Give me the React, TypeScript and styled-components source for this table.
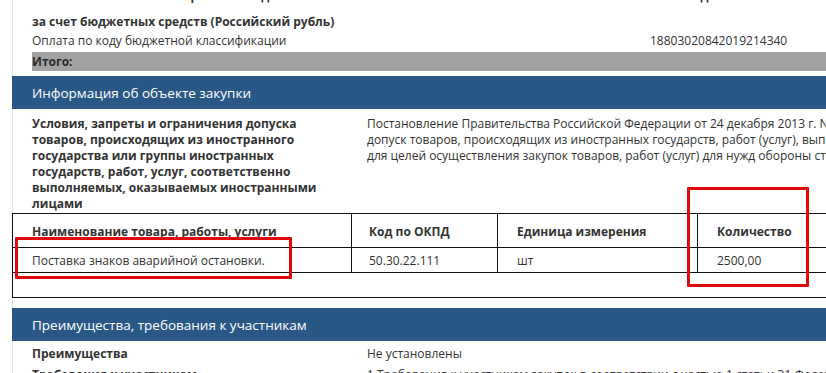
import * as React from 'react'
import styled, { createGlobalStyle } from 'styled-components'

const GlobalStyle = createGlobalStyle`
  html, body {
    margin: 0;
    padding: 0;
    background: #fff;
    overflow: hidden;
  }
  body {
    font-family: 'Open Sans', 'Noto Sans', sans-serif;
    font-size: 12px;
    color: #333;
  }
`

const Page = styled.div`
  margin: -14px 0 0 12px;
  width: 980px;
  border-left: 1px solid #dce3eb;
  min-height: 420px;
`

const Block = styled.div`
  padding: 0 0 0 19px;
`

const LineRow = styled.div<{ $bold?: boolean; $top?: number }>`
  display: flex;
  align-items: center;
  height: 19px;
  margin-top: ${p => p.$top ?? 0}px;
  font-weight: ${p => (p.$bold ? 700 : 400)};
  white-space: nowrap;
`

const LeftCell = styled.div`
  width: 618px;
`

const Total = styled.div`
  margin: 2px 0 0 19px;
  height: 19px;
  background: #a2a2a2;
  display: flex;
  align-items: center;
  font-weight: 700;
  color: #2c2c2c;
`

const SectionHeader = styled.div<{ $top: number }>`
  margin-top: ${p => p.$top}px;
  margin-left: -1px;
  height: 33px;
  background: #2a5886;
  color: #fff;
  font-size: 13.5px;
  display: flex;
  align-items: center;
  padding-left: 20px;
`

const FieldRow = styled.div<{ $pad: number }>`
  display: grid;
  grid-template-columns: 335px 1fr;
  padding: ${p => p.$pad}px 0 0 19px;
  line-height: 16px;
`

const FieldLabel = styled.div`
  font-weight: 700;
  max-width: 292px;
`

const FieldValue = styled.div`
  white-space: nowrap;
`

const TableFrame = styled.div`
  position: relative;
  margin-top: 1px;
  margin-left: -1px;
  border: 1px solid #111;
  border-right: none;
  padding-bottom: 24px;
`

const Grid = styled.table`
  border-collapse: collapse;
  table-layout: fixed;
`

const HeadCell = styled.th<{ $w: number; $pl: number }>`
  width: ${p => p.$w - p.$pl}px;
  height: 31px;
  text-align: left;
  font-weight: 700;
  padding: 2px 0 0 ${p => p.$pl}px;
  border-bottom: 1px solid #111;
  border-left: 1px solid #111;
  white-space: nowrap;
  &:first-child { border-left: none; }
`

const BodyCell = styled.td<{ $pl: number }>`
  height: 24px;
  padding: 0 0 0 ${p => p.$pl}px;
  border-bottom: 1px solid #111;
  border-left: 1px solid #111;
  white-space: nowrap;
  &:first-child { border-left: none; }
`

const Marker = styled.div<{ $x: number; $y: number; $w: number; $h: number }>`
  position: absolute;
  left: ${p => p.$x}px;
  top: ${p => p.$y}px;
  width: ${p => p.$w}px;
  height: ${p => p.$h}px;
  border: 3px solid #e0080c;
  box-sizing: border-box;
  border-radius: 1px;
`

const columns = [
  { title: 'Наименование товара, работы, услуги', w: 338, pl: 19 },
  { title: 'Код по ОКПД', w: 145, pl: 17 },
  { title: 'Единица измерения', w: 199, pl: 19 },
  { title: 'Количество', w: 250, pl: 19 },
]

const row = ['Поставка знаков аварийной остановки.', '50.30.22.111', 'шт', '2500,00']

const App = () => (
  <>
    <GlobalStyle />
    <Page>
      <Block>
        <LineRow $bold>
          <LeftCell>Оплата исполнения контракта по годам</LeftCell>
          <span>КБК / Код КОСГУ</span>
        </LineRow>
        <LineRow $bold $top={7}>
          <LeftCell>за счет бюджетных средств (Российский рубль)</LeftCell>
        </LineRow>
        <LineRow>
          <LeftCell>Оплата по коду бюджетной классификации</LeftCell>
          <span>18803020842019214340</span>
        </LineRow>
      </Block>
      <Total>Итого:</Total>

      <SectionHeader $top={5}>Информация об объекте закупки</SectionHeader>
      <FieldRow $pad={7}>
        <FieldLabel>
          Условия, запреты и ограничения допуска товаров, происходящих из
          иностранного государства или группы иностранных государств, работ,
          услуг, соответственно выполняемых, оказываемых иностранными лицами
        </FieldLabel>
        <FieldValue>
          Постановление Правительства Российской Федерации от 24 декабря 2013 г. N 1224 "Об установлении запрета и ограничений на
          <br />
          допуск товаров, происходящих из иностранных государств, работ (услуг), выполняемых (оказываемых) иностранными лицами,
          <br />
          для целей осуществления закупок товаров, работ (услуг) для нужд обороны страны и безопасности государства"
        </FieldValue>
      </FieldRow>

      <TableFrame>
        <Grid>
          <thead>
            <tr>
              {columns.map(c => (
                <HeadCell key={c.title} $w={c.w} $pl={c.pl}>
                  {c.title}
                </HeadCell>
              ))}
            </tr>
          </thead>
          <tbody>
            <tr>
              {row.map((v, i) => (
                <BodyCell key={v} $pl={columns[i].pl}>
                  {v}
                </BodyCell>
              ))}
            </tr>
          </tbody>
        </Grid>
        <Marker $x={2} $y={23} $w={277} $h={42} />
        <Marker $x={674} $y={-27} $w={122} $h={100} />
      </TableFrame>

      <SectionHeader $top={10}>Преимущества, требования к участникам</SectionHeader>
      <FieldRow $pad={5}>
        <FieldLabel>Преимущества</FieldLabel>
        <FieldValue>Не установлены</FieldValue>
      </FieldRow>
      <FieldRow $pad={5}>
        <FieldLabel>Требования к участникам</FieldLabel>
        <FieldValue>1 Требования к участникам закупок в соответствии с частью 1 статьи 31 Федерального закона № 44-ФЗ</FieldValue>
      </FieldRow>
    </Page>
  </>
)

export default App
